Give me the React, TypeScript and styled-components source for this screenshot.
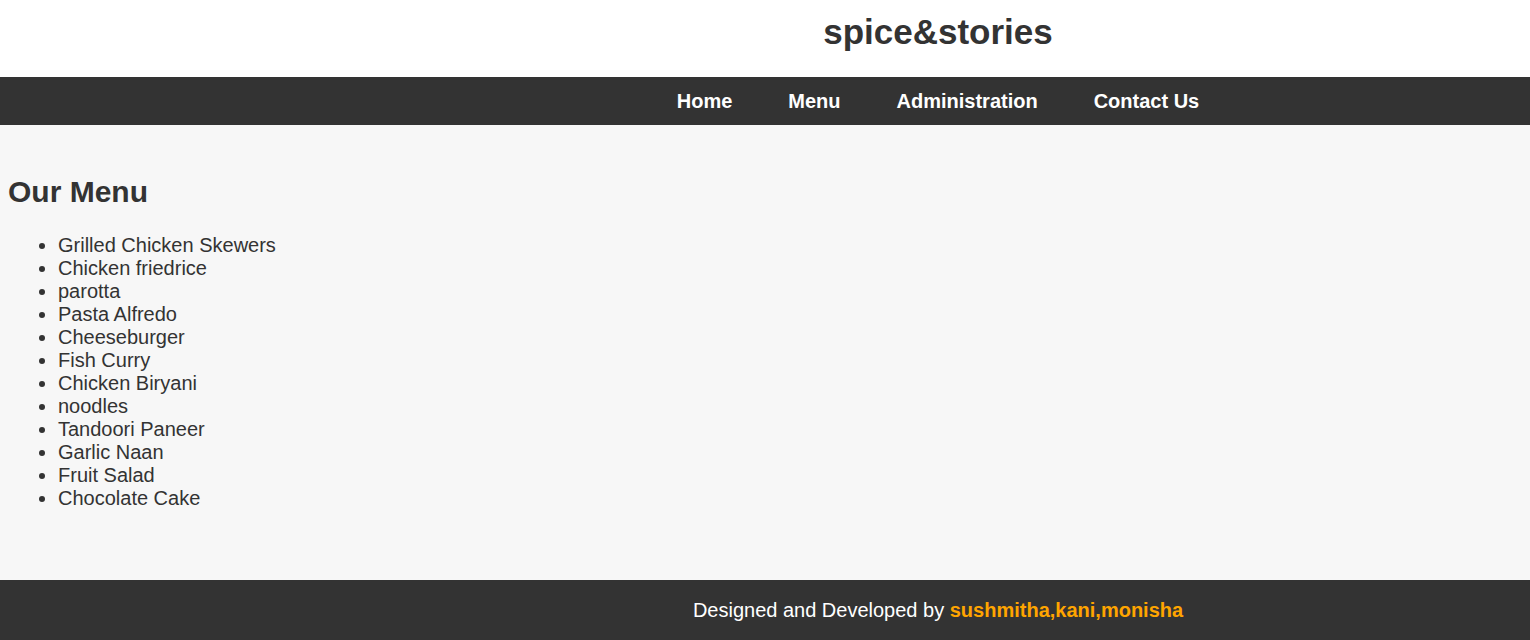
import React from "react";
import styled, { createGlobalStyle } from "styled-components";

const GlobalStyle = createGlobalStyle`
  html, body {
    margin: 0;
    padding: 0;
    font-family: "Liberation Sans", Arial, sans-serif;
    color: #333;
    background: #f7f7f7;
  }
`;

const OFFSET = 346;

const Header = styled.header`
  background: #fff;
  padding: 12px 0 25px ${OFFSET}px;
  text-align: center;
`;

const Title = styled.h1`
  margin: 0;
  font-size: 35px;
  font-weight: bold;
  color: #333;
`;

const Nav = styled.nav`
  background: #333;
  display: flex;
  justify-content: center;
  padding-left: ${OFFSET}px;
`;

const NavLink = styled.a`
  color: #fff;
  font-size: 20px;
  font-weight: bold;
  text-decoration: none;
  padding: 13px 28px 12px;
  line-height: normal;
`;

const Main = styled.main`
  background: #f7f7f7;
  padding: 25px 8px 50px;
  font-size: 20px;
`;

const Heading = styled.h2`
  margin: 25px 0;
  font-size: 30px;
  font-weight: bold;
`;

const List = styled.ul`
  margin: 25px 0 20px;
  padding-left: 50px;
`;

const Item = styled.li`
  font-size: 20px;
  line-height: normal;
`;

const Footer = styled.footer`
  background: #333;
  color: #fff;
  text-align: center;
  font-size: 20px;
  padding: 19px 0 18px ${OFFSET}px;
`;

const Names = styled.span`
  color: #ffa500;
  font-weight: bold;
`;

const items = [
  "Grilled Chicken Skewers",
  "Chicken friedrice",
  "parotta",
  "Pasta Alfredo",
  "Cheeseburger",
  "Fish Curry",
  "Chicken Biryani",
  "noodles",
  "Tandoori Paneer",
  "Garlic Naan",
  "Fruit Salad",
  "Chocolate Cake",
];

export default function App() {
  return (
    <>
      <GlobalStyle />
      <Header>
        <Title>spice&amp;stories</Title>
      </Header>
      <Nav>
        <NavLink href="#">Home</NavLink>
        <NavLink href="#">Menu</NavLink>
        <NavLink href="#">Administration</NavLink>
        <NavLink href="#">Contact Us</NavLink>
      </Nav>
      <Main>
        <Heading>Our Menu</Heading>
        <List>
          {items.map((it) => (
            <Item key={it}>{it}</Item>
          ))}
        </List>
      </Main>
      <Footer>
        Designed and Developed by <Names>sushmitha,kani,monisha</Names>
      </Footer>
    </>
  );
}
